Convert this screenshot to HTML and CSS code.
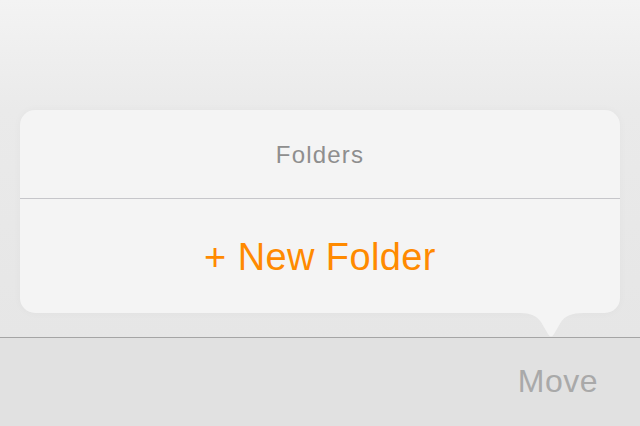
FILE: index.html
```html
<!DOCTYPE html>
<html lang="en">
<head>
    <meta charset="UTF-8">
    <meta name="viewport" content="width=device-width, initial-scale=1.0">
    <title>Move | Folders</title>
    <link rel="stylesheet" href="styles.css">
</head>
<body>

    <!-- Content area with the popover -->
    <div class="content">
        <div class="popover">
            <div class="popover-title">Folders</div>
            <button class="popover-action" type="button">+ New Folder</button>
            <svg class="popover-tail" width="64" height="26" viewBox="0 0 64 26">
                <path d="M0 0 C10 0 17 3 21 9 L28 21 Q31 26 34 21 L41 9 C45 3 52 0 64 0 Z" fill="#f4f4f4"/>
            </svg>
        </div>
    </div>

    <!-- Bottom toolbar -->
    <div class="toolbar">
        <button class="toolbar-button" type="button">Move</button>
    </div>

</body>
</html>
```

FILE: styles.css
```css
/* Reset & Global Styles */
* {
    margin: 0;
    padding: 0;
    box-sizing: border-box;
    font-family: 'Liberation Sans', Arial, sans-serif;
}

body {
    height: 100vh;
    display: flex;
    flex-direction: column;
    background: #e6e6e6;
}

/* Content area */
.content {
    height: 338px;
    padding: 110px 20px 0;
    background: linear-gradient(to bottom, #f3f3f3 0px, #eaeaea 110px, #e6e6e6 338px);
    border-bottom: 1px solid #a5a5a5;
}

/* Popover */
.popover {
    position: relative;
    height: 203px;
    background: #f4f4f4;
    border-radius: 15px;
    box-shadow: 0 0 8px rgba(0, 0, 0, 0.03);
    display: flex;
    flex-direction: column;
}

.popover-title {
    height: 89px;
    display: flex;
    align-items: center;
    justify-content: center;
    padding-top: 1px;
    font-size: 24px;
    letter-spacing: 1.2px;
    color: #8e8e8e;
    border-bottom: 1px solid #c6c6ca;
}

.popover-action {
    flex: 1;
    background: none;
    border: none;
    color: #ff8a00;
    font-size: 38px;
    letter-spacing: 0.4px;
    padding-top: 2px;
    cursor: pointer;
}

.popover-tail {
    position: absolute;
    top: 100%;
    left: 500px;
    display: block;
}

/* Toolbar */
.toolbar {
    flex: 1;
    display: flex;
    align-items: center;
    justify-content: flex-end;
    padding: 0 42px 2px 0;
    background: #e1e1e1;
}

.toolbar-button {
    background: none;
    border: none;
    color: #a9a9a9;
    font-size: 32px;
    letter-spacing: 0.5px;
    cursor: pointer;
}
```
